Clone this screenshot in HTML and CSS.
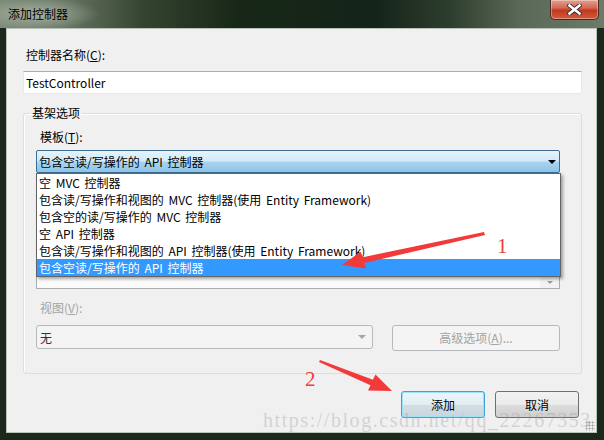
FILE: index.html
```html
<!DOCTYPE html>
<html>
<head>
    <title>添加控制器</title>
    <link rel="stylesheet" href="styles.css">
</head>
<body>
    <div class="window">
        <div class="titlebar">
            <span class="title">添加控制器</span>
            <div class="close-btn">
                <svg width="15" height="11" viewBox="0 0 15 11">
                    <path d="M2.5 1.5 L12.5 9.5 M12.5 1.5 L2.5 9.5" stroke="#3a2a2a" stroke-width="4.4" stroke-linecap="square"/>
                    <path d="M2.5 1.5 L12.5 9.5 M12.5 1.5 L2.5 9.5" stroke="#fff" stroke-width="2.6" stroke-linecap="square"/>
                </svg>
            </div>
        </div>

        <div class="client">
            <div class="label indent">控制器名称(<u>C</u>):</div>
            <div class="textbox">TestController</div>

            <fieldset class="group">
                <legend>基架选项</legend>
                <div class="label sub">模板(<u>T</u>):</div>
                <div class="combo-wrap">
                    <div class="combo active">
                        <span>包含空读/写操作的 API 控制器</span>
                        <span class="arrow"></span>
                    </div>
                    <ul class="dropdown">
                        <li>空 MVC 控制器</li>
                        <li>包含读/写操作和视图的 MVC 控制器(使用 Entity Framework)</li>
                        <li>包含空的读/写操作的 MVC 控制器</li>
                        <li>空 API 控制器</li>
                        <li>包含读/写操作和视图的 API 控制器(使用 Entity Framework)</li>
                        <li class="selected">包含空读/写操作的 API 控制器</li>
                    </ul>
                </div>
                <div class="listbox">
                    <div class="scrollbar"><span class="arrow small"></span></div>
                </div>

                <div class="label sub disabled view-label">视图(<u>V</u>):</div>
                <div class="view-row">
                    <div class="combo view-combo">
                        <span>无</span>
                        <span class="arrow gray"></span>
                    </div>
                    <div class="btn adv-btn">高级选项(<u>A</u>)...</div>
                </div>
            </fieldset>

            <div class="actions">
                <div class="btn default">添加</div>
                <div class="btn">取消</div>
            </div>
            <div class="grip"></div>
        </div>

        <div class="watermark">https://blog.csdn.net/qq_22267353</div>

        <!-- red hand-drawn markers -->
        <svg class="annotations" width="604" height="440" viewBox="0 0 604 440">
            <polygon points="484,232 362.8,257.2 360.5,251.8 342,265 366,268.4 364.2,263 485,235" fill="#f23a3a"/>
            <polygon points="320,360 372.9,379.7 375.5,374.5 392,391 368,390.5 370.5,385.3 319,362" fill="#f23a3a"/>
            <text x="497" y="253" class="mark">1</text>
            <text x="305" y="386" class="mark">2</text>
        </svg>
    </div>
</body>
</html>
```

FILE: styles.css
```css
* {
    box-sizing: border-box;
}

body {
    margin: 0;
    font-family: "Noto Sans CJK SC", "Noto Sans", sans-serif;
    font-size: 12px;
    word-spacing: 2px;
    color: #000;
    background: #1a291b;
}

.window {
    position: relative;
    width: 604px;
    height: 440px;
    display: flex;
    flex-direction: column;
    background: #1a291b;
    overflow: hidden;
}

.titlebar {
    height: 28px;
    display: flex;
    align-items: flex-start;
    padding-left: 8px;
    background:
        radial-gradient(ellipse 60px 16px at 40px 14px, rgba(210,218,205,0.55), rgba(210,218,205,0) 100%),
        linear-gradient(90deg, #7e8c7a 0%, #6a7866 10%, #34432f 24%, #172717 40%, #15241a 62%, #2c3c2c 74%, #5a6957 86%, #6c7b69 100%);
}

.title {
    line-height: 16px;
    margin-top: 6px;
}

.close-btn {
    margin-left: auto;
    margin-right: 5px;
    width: 49px;
    height: 20px;
    display: flex;
    align-items: center;
    justify-content: center;
    border: 1px solid #4a2a22;
    border-top: none;
    border-radius: 0 0 5px 5px;
    background: linear-gradient(#e4a191 0%, #d36a55 40%, #c1391f 55%, #d45a3a 100%);
    box-shadow: inset 0 0 0 1px rgba(255,255,255,0.35);
}

.client {
    position: relative;
    flex: 1;
    margin: 0 7px 7px 6px;
    padding: 18px 14px 0 16px;
    background: #f0f0f0;
    border: 1px solid #b9c2b8;
}

.label {
    line-height: 16px;
}

.indent {
    margin-left: 3px;
}

.sub {
    margin-left: 4px;
}

.disabled {
    color: #a3a3a3;
}

.view-label {
    margin-top: 11px;
}

.textbox {
    margin-top: 8px;
    height: 23px;
    padding-left: 2px;
    line-height: 21px;
    background: #fff;
    border: 1px solid #e3e9ef;
    border-top-color: #abadb3;
}

.group {
    margin: 11px 0 0;
    padding: 8px 21px 22px 12px;
    border: 1px solid #d5dfe5;
    border-radius: 3px;
    box-shadow: inset 1px 1px 0 #fff;
}

.group legend {
    padding: 0 2px;
    margin-left: -6px;
    line-height: 16px;
}

.combo-wrap {
    position: relative;
    margin-top: 5px;
}

.combo {
    height: 23px;
    display: flex;
    align-items: center;
    justify-content: space-between;
    padding: 0 3px 0 2px;
    border: 1px solid #3c7fb1;
    border-radius: 2px;
}

.combo.active {
    border-color: #3d6d92;
    background: linear-gradient(#e6f3fb 0%, #d2eaf8 48%, #a9d4ef 52%, #8ec3e6 100%);
}

.arrow {
    width: 0;
    height: 0;
    border-left: 4px solid transparent;
    border-right: 4px solid transparent;
    border-top: 4px solid #000;
}

.arrow.gray {
    border-top-color: #a6a6a6;
    margin-right: 3px;
}

.arrow.small {
    border-left-width: 3px;
    border-right-width: 3px;
    border-top: 3px solid #9a9a9a;
}

.dropdown {
    position: absolute;
    top: 100%;
    left: 0;
    z-index: 2;
    width: 525px;
    margin: 0;
    padding: 0;
    list-style: none;
    background: #fff;
    border: 1px solid #646464;
    box-shadow: 2px 2px 3px rgba(0,0,0,0.35);
}

.dropdown li {
    height: 17px;
    line-height: 17px;
    padding-left: 2px;
    white-space: nowrap;
}

.dropdown li.selected {
    background: #3399ff;
    color: #fff;
}

.listbox {
    margin-top: 7px;
    height: 109px;
    display: flex;
    justify-content: flex-end;
    background: #fbfbfb;
    border: 1px solid #abadb3;
}

.scrollbar {
    width: 19px;
    display: flex;
    align-items: flex-end;
    justify-content: center;
    padding-bottom: 4px;
    background: #f2f2f2;
}

.view-row {
    margin-top: 9px;
    display: flex;
    align-items: flex-start;
    gap: 19px;
}

.view-combo {
    width: 337px;
    height: 24px;
    padding-left: 3px;
    background: #f4f4f4;
    border-color: #b5b9bc;
    border-radius: 3px;
    color: #333;
}

.btn {
    width: 84px;
    height: 27px;
    line-height: 25px;
    text-align: center;
    border: 1px solid #707070;
    border-radius: 3px;
    background: linear-gradient(#f2f2f2 0%, #ebebeb 50%, #dddddd 50%, #cfcfcf 100%);
}

.adv-btn {
    width: 168px;
    height: 26px;
    line-height: 24px;
    color: #a3a3a3;
    background: #f4f4f4;
    border-color: #b5b9bc;
}

.btn.default {
    border-color: #3fa2d6;
    box-shadow: inset 0 0 0 1px #9fe0fa;
    background: linear-gradient(#eaf6fb 0%, #e3eef3 50%, #d3dfe5 50%, #c8d6dd 100%);
}

.actions {
    margin-top: 17px;
    margin-right: 3px;
    display: flex;
    justify-content: flex-end;
    gap: 10px;
}

.grip {
    position: absolute;
    right: 1px;
    bottom: 1px;
    width: 10px;
    height: 10px;
    background: radial-gradient(circle, #a0a0a0 0.8px, transparent 1.2px) 0 0 / 3px 3px;
}

.watermark {
    position: absolute;
    left: 263px;
    top: 409px;
    font-family: "Liberation Serif", serif;
    font-size: 20px;
    letter-spacing: 1.55px;
    word-spacing: 0;
    color: rgba(150,150,150,0.34);
    white-space: nowrap;
}

.annotations {
    position: absolute;
    left: 0;
    top: 0;
    z-index: 5;
    pointer-events: none;
}

.mark {
    font-family: "Liberation Serif", serif;
    font-size: 21px;
    fill: #f03c3c;
}
```
